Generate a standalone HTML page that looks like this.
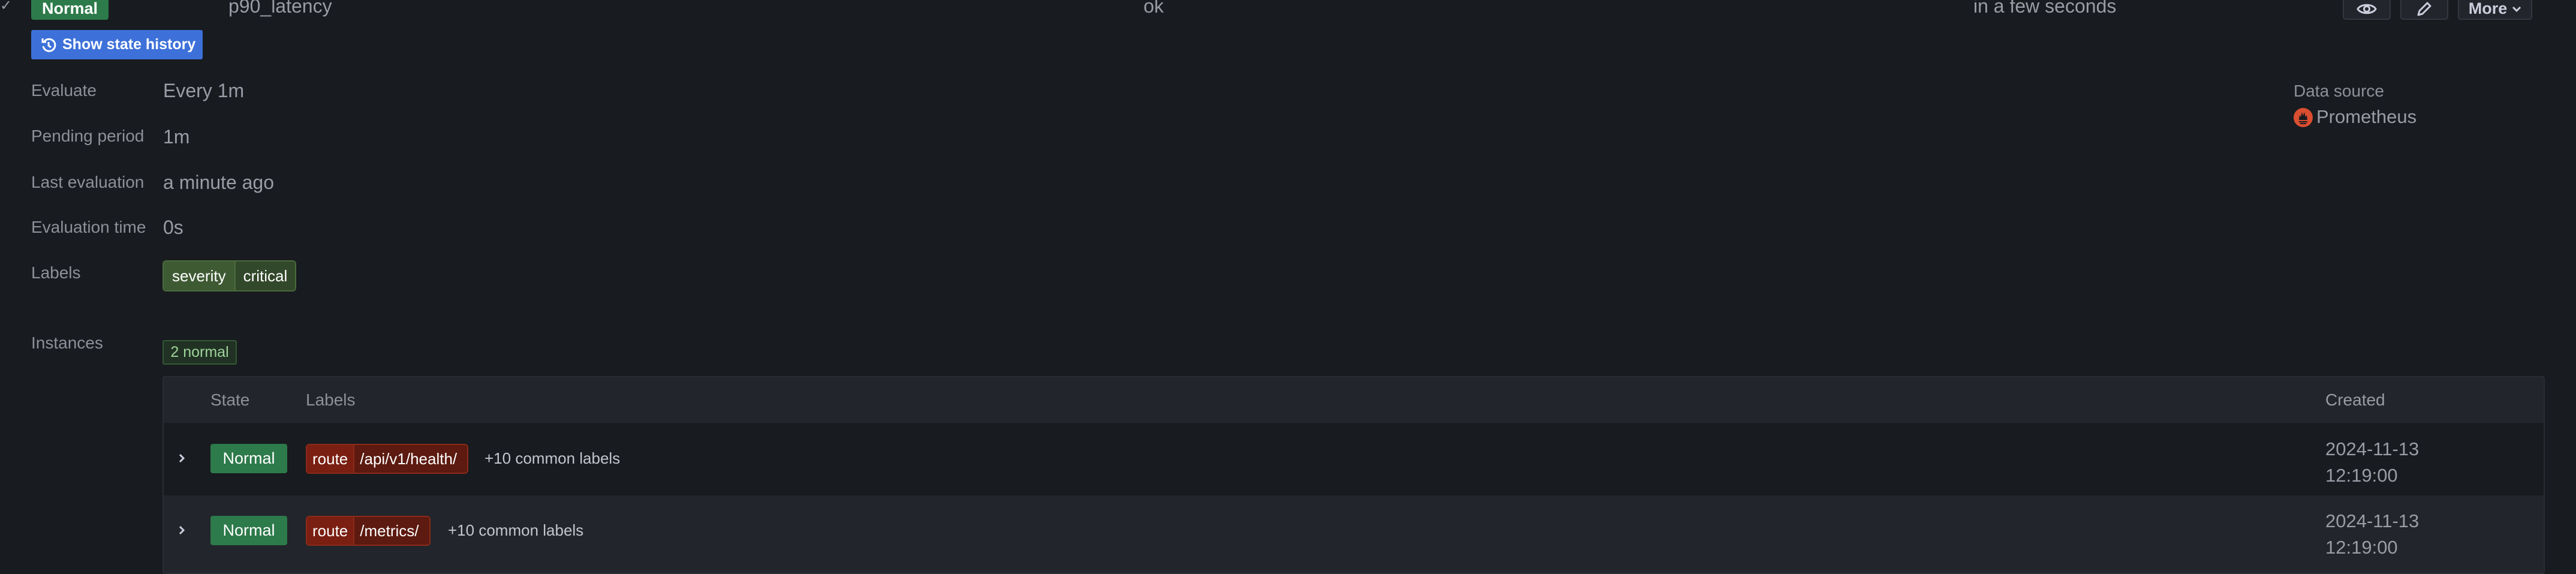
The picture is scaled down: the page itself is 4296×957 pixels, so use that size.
<!DOCTYPE html>
<html><head><meta charset="utf-8"><style>
*{box-sizing:border-box;margin:0;padding:0}
body{width:4296px;height:944px;background:#181b1f;font-family:"Liberation Sans",sans-serif;color:#ccccdc;position:relative;overflow:hidden}
.a{position:absolute;white-space:nowrap}
.lbl{font-size:28px;color:#8e909a}
.val{font-size:32px;color:#9a9ca6}
.badge{background:#2d7a4a;color:#fff;font-weight:bold;font-size:27px;border-radius:4px;display:flex;align-items:center;justify-content:center}
.btn{background:#22252b;border:2px solid #34373e;border-radius:5px;display:flex;align-items:center;justify-content:center;color:#ccccdc}
.chip{display:flex;border-radius:6px;overflow:hidden;font-size:26px;color:#fff;height:50px}
.chip span{display:flex;align-items:center;padding:0 9px}
</style></head><body>
<!-- top row -->
<div class="a" style="left:0;top:0;font-size:24px;color:#9a9ca6;line-height:20px">✓</div>
<div class="a badge" style="left:52px;top:-4px;width:129px;height:37px">Normal</div>
<div class="a val" style="left:381px;top:-8px">p90_latency</div>
<div class="a val" style="left:1907px;top:-8px">ok</div>
<div class="a val" style="left:3291px;top:-8px">in a few seconds</div>
<div class="a btn" style="left:3907px;top:-4px;width:80px;height:37px"><svg width="34" height="24" viewBox="0 0 34 24"><path d="M2 12C7 3 27 3 32 12C27 21 7 21 2 12Z" fill="none" stroke="#ccccdc" stroke-width="3"/><circle cx="17" cy="12" r="4.5" fill="none" stroke="#ccccdc" stroke-width="3"/></svg></div>
<div class="a btn" style="left:4003px;top:-4px;width:80px;height:37px"><svg width="28" height="28" viewBox="0 0 28 28"><path d="M4 24L6 17L19 4L24 9L11 22Z" fill="none" stroke="#ccccdc" stroke-width="3" stroke-linejoin="round"/></svg></div>
<div class="a btn" style="left:4099px;top:-4px;width:124px;height:37px;font-size:27px;font-weight:bold">More <svg width="16" height="10" viewBox="0 0 16 10" style="margin-left:8px"><path d="M2 2L8 8L14 2" fill="none" stroke="#ccccdc" stroke-width="3"/></svg></div>
<!-- show state history -->
<div class="a" style="left:52px;top:50px;width:286px;height:49px;background:#3d71d9;border-radius:3px;color:#fff;font-size:25px;font-weight:bold;display:flex;align-items:center;padding-left:16px">
<svg width="26" height="30" viewBox="0 0 26 30" style="margin-right:10px"><path d="M6 9A10 10 0 1 1 4 17" fill="none" stroke="#fff" stroke-width="3"/><path d="M3 4V10H9" fill="none" stroke="#fff" stroke-width="3"/><path d="M13 10V16L17 19" fill="none" stroke="#fff" stroke-width="3"/></svg>Show state history</div>
<!-- details -->
<div class="a lbl" style="left:52px;top:135px">Evaluate</div><div class="a val" style="left:272px;top:133px">Every 1m</div>
<div class="a lbl" style="left:52px;top:211px">Pending period</div><div class="a val" style="left:272px;top:210px">1m</div>
<div class="a lbl" style="left:52px;top:288px">Last evaluation</div><div class="a val" style="left:272px;top:286px">a minute ago</div>
<div class="a lbl" style="left:52px;top:363px">Evaluation time</div><div class="a val" style="left:272px;top:361px">0s</div>
<div class="a lbl" style="left:52px;top:439px">Labels</div>
<div class="a chip" style="left:271px;top:434px;height:52px;border:2px solid #4a6b3c"><span style="background:#3e5a33;padding:0 14px">severity</span><span style="background:#32482a;border-left:2px solid #4a6b3c;padding:0 13px">critical</span></div>
<div class="a lbl" style="left:3825px;top:136px">Data source</div>
<svg class="a" style="left:3825px;top:180px" width="32" height="32" viewBox="0 0 32 32"><circle cx="16" cy="16" r="16" fill="#da4e31"/><path d="M9 20L10 12L12 15L14 7L16 13L18 7L20 15L22 12L23 20Z" fill="#181b1f"/><rect x="9" y="22" width="14" height="2" fill="#181b1f"/><rect x="11" y="25" width="10" height="2" fill="#181b1f"/></svg>
<div class="a val" style="left:3863px;top:177px;font-size:31px">Prometheus</div>
<!-- instances -->
<div class="a lbl" style="left:52px;top:556px">Instances</div>
<div class="a" style="left:271px;top:567px;width:124px;height:41px;background:#213224;border:2px solid #335836;border-radius:3px;color:#9ed39a;font-size:25px;display:flex;align-items:center;justify-content:center">2 normal</div>
<div class="a" style="left:271px;top:627px;width:3973px;height:330px;background:#22252b;border:2px solid #2a2d33;border-radius:4px;overflow:hidden">
 <div class="a" style="left:0;top:76px;width:100%;height:121px;background:#181b1f"></div>
 <div class="a lbl" style="left:78px;top:22px">State</div>
 <div class="a lbl" style="left:237px;top:22px">Labels</div>
 <div class="a lbl" style="left:3605px;top:22px;color:#9a9ca6">Created</div>
 <svg class="a" style="left:24px;top:126px" width="12" height="18" viewBox="0 0 12 18"><path d="M3 3L9 9L3 15" fill="none" stroke="#ccccdc" stroke-width="3"/></svg>
 <div class="a badge" style="left:78px;top:111px;width:128px;height:49px;font-weight:normal">Normal</div>
 <div class="a chip" style="left:237px;top:111px;border:2px solid #8c2a1a;width:271px"><span style="background:#7a1f12">route</span><span style="background:#5c1a10;border-left:2px solid #8c2a1a;flex:1">/api/v1/health/</span></div>
 <div class="a" style="left:535px;top:120px;font-size:26px;color:#c4c5cf">+10 common labels</div>
 <div class="a val" style="left:3605px;top:98px;font-size:31px;line-height:44px;white-space:normal">2024-11-13<br>12:19:00</div>
 <svg class="a" style="left:24px;top:246px" width="12" height="18" viewBox="0 0 12 18"><path d="M3 3L9 9L3 15" fill="none" stroke="#ccccdc" stroke-width="3"/></svg>
 <div class="a badge" style="left:78px;top:231px;width:128px;height:49px;font-weight:normal">Normal</div>
 <div class="a chip" style="left:237px;top:231px;border:2px solid #8c2a1a;width:208px"><span style="background:#7a1f12">route</span><span style="background:#5c1a10;border-left:2px solid #8c2a1a;flex:1">/metrics/</span></div>
 <div class="a" style="left:474px;top:240px;font-size:26px;color:#c4c5cf">+10 common labels</div>
 <div class="a val" style="left:3605px;top:218px;font-size:31px;line-height:44px;white-space:normal">2024-11-13<br>12:19:00</div>
</div>
</body></html>
